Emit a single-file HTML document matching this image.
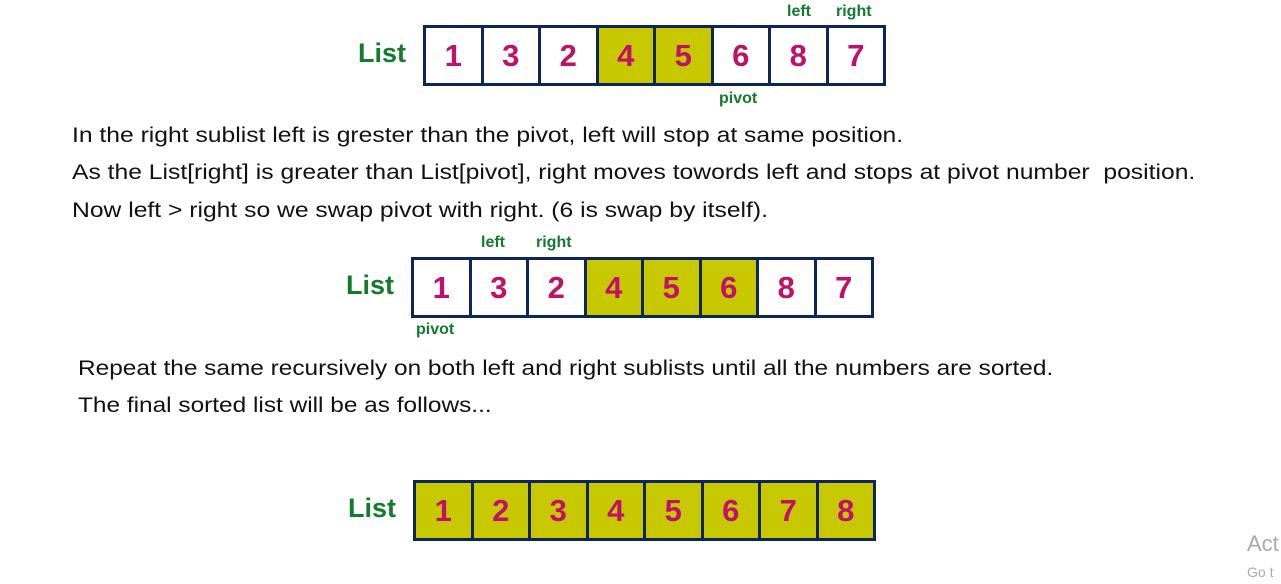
<!DOCTYPE html>
<html><head><style>
body{margin:0;width:1281px;height:584px;background:#fff;position:relative;overflow:hidden;font-family:"Liberation Sans",sans-serif}
.row{position:absolute;display:flex;border:3px solid #0d2559;height:55px;box-sizing:content-box}
.c{width:54.5px;height:55px;border-right:3px solid #0d2559;display:flex;align-items:center;justify-content:center;color:#c0106a;font-weight:bold;font-size:31px;background:#fff}
.c:last-child{border-right:none}
.y{background:#c8c800}
.lab{position:absolute;color:#137a2e;font-weight:bold;font-size:27px}
.s{position:absolute;color:#137a2e;font-weight:bold;font-size:16px}
.t{position:absolute;font-size:21px;color:#111;white-space:nowrap;transform:scaleX(1.175);transform-origin:0 0}
.t2{transform:scaleX(1.162)}
</style></head><body>
<div class="lab" style="left:358px;top:38px">List</div>
<div class="s" style="left:787px;top:3px">left</div>
<div class="s" style="left:836px;top:3px">right</div>
<div class="row" style="left:423px;top:25px">
<div class="c">1</div><div class="c">3</div><div class="c">2</div><div class="c y">4</div><div class="c y">5</div><div class="c">6</div><div class="c">8</div><div class="c">7</div></div>
<div class="s" style="left:719px;top:90px">pivot</div>

<div class="t" style="left:72px;top:124px">In the right sublist left is grester than the pivot, left will stop at same position.</div>
<div class="t" style="left:72px;top:161px">As the List[right] is greater than List[pivot], right moves towords left and stops at pivot number&nbsp; position.</div>
<div class="t" style="left:72px;top:199px">Now left &gt; right so we swap pivot with right. (6 is swap by itself).</div>

<div class="lab" style="left:346px;top:270px">List</div>
<div class="s" style="left:481px;top:234px">left</div>
<div class="s" style="left:536px;top:234px">right</div>
<div class="row" style="left:411px;top:257px">
<div class="c">1</div><div class="c">3</div><div class="c">2</div><div class="c y">4</div><div class="c y">5</div><div class="c y">6</div><div class="c">8</div><div class="c">7</div></div>
<div class="s" style="left:416px;top:321px">pivot</div>

<div class="t t2" style="left:78px;top:357px">Repeat the same recursively on both left and right sublists until all the numbers are sorted.</div>
<div class="t t2" style="left:78px;top:394px">The final sorted list will be as follows...</div>

<div class="lab" style="left:348px;top:493px">List</div>
<div class="row" style="left:413px;top:480px">
<div class="c y">1</div><div class="c y">2</div><div class="c y">3</div><div class="c y">4</div><div class="c y">5</div><div class="c y">6</div><div class="c y">7</div><div class="c y">8</div></div>

<div style="position:absolute;left:1247px;top:531px;font-size:22px;color:#aaa">Act</div>
<div style="position:absolute;left:1247px;top:564px;font-size:14px;color:#aaa">Go t</div>
</body></html>
